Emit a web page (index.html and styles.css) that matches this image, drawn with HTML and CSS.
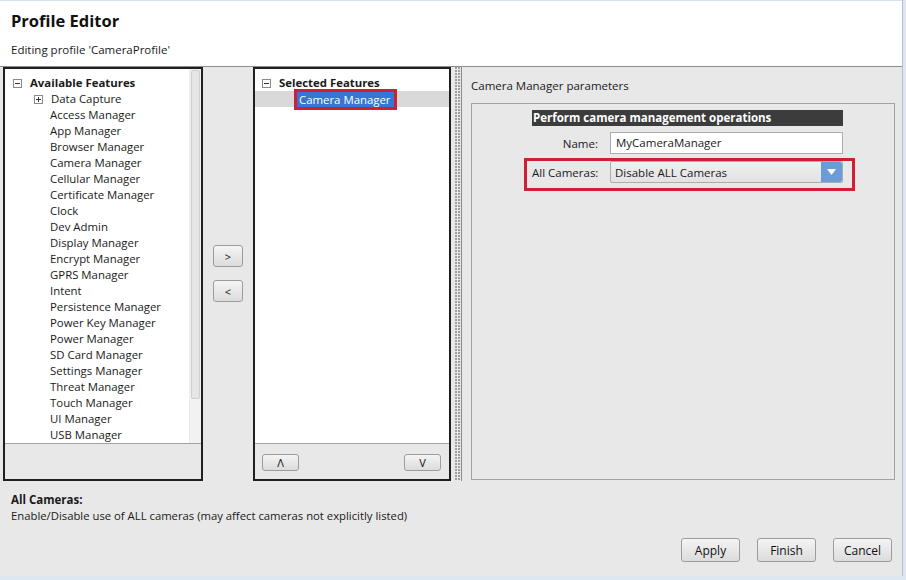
FILE: index.html
```html
<!DOCTYPE html>
<html>
<head>
<meta charset="utf-8">
<link rel="stylesheet" href="styles.css">
</head>
<body>
<div class="window">
  <div class="header">
    <div class="title">Profile Editor</div>
    <div class="subtitle">Editing profile 'CameraProfile'</div>
  </div>
  <div class="main">
    <div class="panel left-panel">
      <div class="tree-area">
        <div class="tree">
          <div class="row root"><span class="exp minus"></span><span class="lbl">Available Features</span></div>
          <div class="row child"><span class="exp plus"></span><span class="lbl">Data Capture</span></div>
          <div class="row leaf"><span class="lbl">Access Manager</span></div>
          <div class="row leaf"><span class="lbl">App Manager</span></div>
          <div class="row leaf"><span class="lbl">Browser Manager</span></div>
          <div class="row leaf"><span class="lbl">Camera Manager</span></div>
          <div class="row leaf"><span class="lbl">Cellular Manager</span></div>
          <div class="row leaf"><span class="lbl">Certificate Manager</span></div>
          <div class="row leaf"><span class="lbl">Clock</span></div>
          <div class="row leaf"><span class="lbl">Dev Admin</span></div>
          <div class="row leaf"><span class="lbl">Display Manager</span></div>
          <div class="row leaf"><span class="lbl">Encrypt Manager</span></div>
          <div class="row leaf"><span class="lbl">GPRS Manager</span></div>
          <div class="row leaf"><span class="lbl">Intent</span></div>
          <div class="row leaf"><span class="lbl">Persistence Manager</span></div>
          <div class="row leaf"><span class="lbl">Power Key Manager</span></div>
          <div class="row leaf"><span class="lbl">Power Manager</span></div>
          <div class="row leaf"><span class="lbl">SD Card Manager</span></div>
          <div class="row leaf"><span class="lbl">Settings Manager</span></div>
          <div class="row leaf"><span class="lbl">Threat Manager</span></div>
          <div class="row leaf"><span class="lbl">Touch Manager</span></div>
          <div class="row leaf"><span class="lbl">UI Manager</span></div>
          <div class="row leaf"><span class="lbl">USB Manager</span></div>
        </div>
        <div class="scrollbar"><div class="thumb"></div></div>
      </div>
      <div class="panel-foot"></div>
    </div>
    <div class="move-col">
      <button class="btn small">&gt;</button>
      <button class="btn small">&lt;</button>
    </div>
    <div class="panel center-panel">
      <div class="tree-area">
        <div class="tree">
          <div class="row root"><span class="exp minus"></span><span class="lbl">Selected Features</span></div>
          <div class="row leaf selected"><span class="lbl sel-lbl">Camera Manager<span class="mark mark-sel"></span></span></div>
        </div>
      </div>
      <div class="panel-foot order">
        <button class="btn order-btn">&#923;</button>
        <button class="btn order-btn">V</button>
      </div>
    </div>
    <div class="splitter"><div class="dots"></div></div>
    <div class="right-panel">
      <div class="params-title">Camera Manager parameters</div>
      <div class="params-box">
        <div class="form">
          <div class="form-head">Perform camera management operations</div>
          <div class="form-row">
            <label class="flabel">Name:</label>
            <div class="input">MyCameraManager</div>
          </div>
          <div class="form-row marked">
            <label class="flabel">All Cameras:</label>
            <div class="select"><span class="sel-text">Disable ALL Cameras</span><span class="drop"><svg width="9" height="6" viewBox="0 0 9 6"><path d="M0 0H9L4.5 6Z" fill="#fff"/></svg></span></div>
            <span class="mark mark-row"></span>
          </div>
        </div>
      </div>
    </div>
  </div>
  <div class="footer">
    <div class="help-title">All Cameras:</div>
    <div class="help-text">Enable/Disable use of ALL cameras (may affect cameras not explicitly listed)</div>
    <div class="actions">
      <button class="btn action">Apply</button>
      <button class="btn action">Finish</button>
      <button class="btn action">Cancel</button>
    </div>
  </div>
</div>
<div class="bottom-strip"></div>
</body>
</html>
```
FILE: styles.css
```css
* { box-sizing: border-box; }
html, body { margin: 0; padding: 0; }
body {
  width: 906px;
  height: 580px;
  overflow: hidden;
  background: #dde7f1;
  font-family: "Open Sans", "Noto Sans", sans-serif;
  font-size: 12px;
  color: #1a1a1a;
}
.window {
  width: 903px;
  height: 576px;
  background: #e8e8e8;
  border-right: 1px solid #b9bcc0;
  display: flex;
  flex-direction: column;
}
.header {
  height: 67px;
  background: #fff;
  border-top: 1px solid #d6e2ee;
  border-bottom: 1px solid #8d8d8d;
  padding: 8px 0 0 11px;
}
.title {
  font-weight: bold;
  font-size: 16.5px;
  line-height: 24px;
  color: #111;
}
.subtitle {
  margin-top: 9px;
  line-height: 16px;
  font-size: 11.5px;
}
.main {
  height: 414px;
  display: flex;
  padding-left: 3px;
}
.panel {
  border: 2px solid #1f1f1f;
  display: flex;
  flex-direction: column;
  background: #e8e8e8;
}
.left-panel { width: 200px; }
.center-panel { width: 198px; }
.tree-area {
  height: 375px;
  background: #fff;
  border-bottom: 1px solid #a3a3a3;
  display: flex;
  position: relative;
}
.tree {
  flex: 1;
  padding-top: 6px;
}
.row {
  height: 16px;
  line-height: 16px;
  display: flex;
  align-items: center;
  white-space: nowrap;
  font-size: 11.4px;
}
.row.root { padding-left: 8px; font-weight: bold; }
.row.child { padding-left: 29px; }
.row.leaf { padding-left: 45px; }
.center-panel .row.root { padding-left: 7px; }
.center-panel .row.leaf { padding-left: 42px; }
.exp {
  width: 9px;
  height: 9px;
  border: 1px solid #8a8a8a;
  position: relative;
  margin-right: 8px;
  flex: none;
  background: #fff;
}
.exp::before {
  content: "";
  position: absolute;
  left: 1px; right: 1px; top: 3px;
  height: 1px;
  background: #333;
}
.exp.plus::after {
  content: "";
  position: absolute;
  top: 1px; bottom: 1px; left: 3px;
  width: 1px;
  background: #333;
}
.row.selected {
  background: #d9d9d9;
  margin-top: 0;
  height: 16px;
}
.sel-lbl {
  position: relative;
  background: #3575d3;
  color: #fff;
  padding: 0 3px 0 2px;
  line-height: 15px;
}
.mark {
  position: absolute;
  border: 3px solid #cf1f31;
  pointer-events: none;
}
.mark-sel { left: -3px; right: -3px; top: -3px; bottom: -3px; }
.scrollbar {
  width: 12px;
  background: #f2f2f2;
  border-left: 1px solid #ececec;
  padding: 1px 0;
}
.thumb {
  height: 329px;
  margin: 0 1px;
  background: #e6e6e6;
  border: 1px solid #cfcfcf;
  border-radius: 2px;
}
.panel-foot { flex: 1; }
.panel-foot.order {
  display: flex;
  justify-content: space-between;
  align-items: flex-start;
  padding: 10px 8px 0 7px;
}
.btn {
  font-family: inherit;
  font-size: 12px;
  color: #111;
  background: linear-gradient(#f4f4f4, #dcdcdc);
  border: 1px solid #9c9c9c;
  border-radius: 3px;
  padding: 0;
  margin: 0;
}
.move-col {
  width: 50px;
  display: flex;
  flex-direction: column;
  align-items: center;
  padding-top: 178px;
  gap: 13px;
}
.btn.small { width: 30px; height: 22px; font-size: 11px; }
.btn.order-btn { width: 37px; height: 17px; font-size: 11px; line-height: 14px; }
.splitter {
  width: 10px;
  padding-left: 4px;
}
.dots {
  width: 6px;
  height: 100%;
  background-image: radial-gradient(circle at 1px 1px, #9f9f9f 0.7px, transparent 1px);
  background-size: 3px 3px;
}
.right-panel {
  flex: 1;
  border-left: 1px solid #8a8a8a;
  padding: 11px 7px 1px 9px;
  display: flex;
  flex-direction: column;
}
.params-title {
  line-height: 16px;
  font-size: 11.5px;
}
.params-box {
  flex: 1;
  margin-top: 9px;
  border: 1px solid #a2a2a2;
  padding: 6px 0 0 60px;
}
.form {
  width: 311px;
  display: flex;
  flex-direction: column;
}
.form-head {
  background: #3c3c3c;
  color: #fff;
  font-weight: bold;
  height: 16px;
  line-height: 16px;
  padding-left: 1px;
  font-size: 11.5px;
}
.form-row {
  display: flex;
  align-items: center;
  gap: 12px;
  margin-top: 6px;
  position: relative;
}
.form-row.marked { margin-top: 7px; }
.flabel {
  width: 66px;
  text-align: right;
  font-size: 11.5px;
  white-space: nowrap;
}
.input {
  width: 233px;
  height: 22px;
  line-height: 20px;
  background: #fff;
  border: 1px solid #acacac;
  padding-left: 5px;
  font-size: 11.5px;
}
.select {
  width: 233px;
  height: 22px;
  border: 1px solid #acacac;
  border-radius: 2px;
  background: linear-gradient(#f0f0f0, #e2e2e2);
  display: flex;
  align-items: center;
  justify-content: space-between;
  font-size: 11.5px;
}
.sel-text { padding-left: 4px; }
.drop {
  width: 21px;
  height: 20px;
  background: #6b9cd9;
  display: flex;
  align-items: center;
  justify-content: center;
  border-radius: 0 2px 2px 0;
}
.mark-row { left: -8px; right: -12px; top: -3px; bottom: -8px; }
.footer {
  flex: 1;
  padding: 11px 10px 0 11px;
  display: flex;
  flex-direction: column;
}
.help-title { font-weight: bold; line-height: 16px; font-size: 11.5px; }
.help-text { line-height: 16px; font-size: 11.3px; }
.actions {
  display: flex;
  justify-content: flex-end;
  gap: 17px;
  margin-top: 14px;
}
.btn.action { width: 59px; height: 24px; font-size: 12px; }
.bottom-strip { height: 4px; }
```
